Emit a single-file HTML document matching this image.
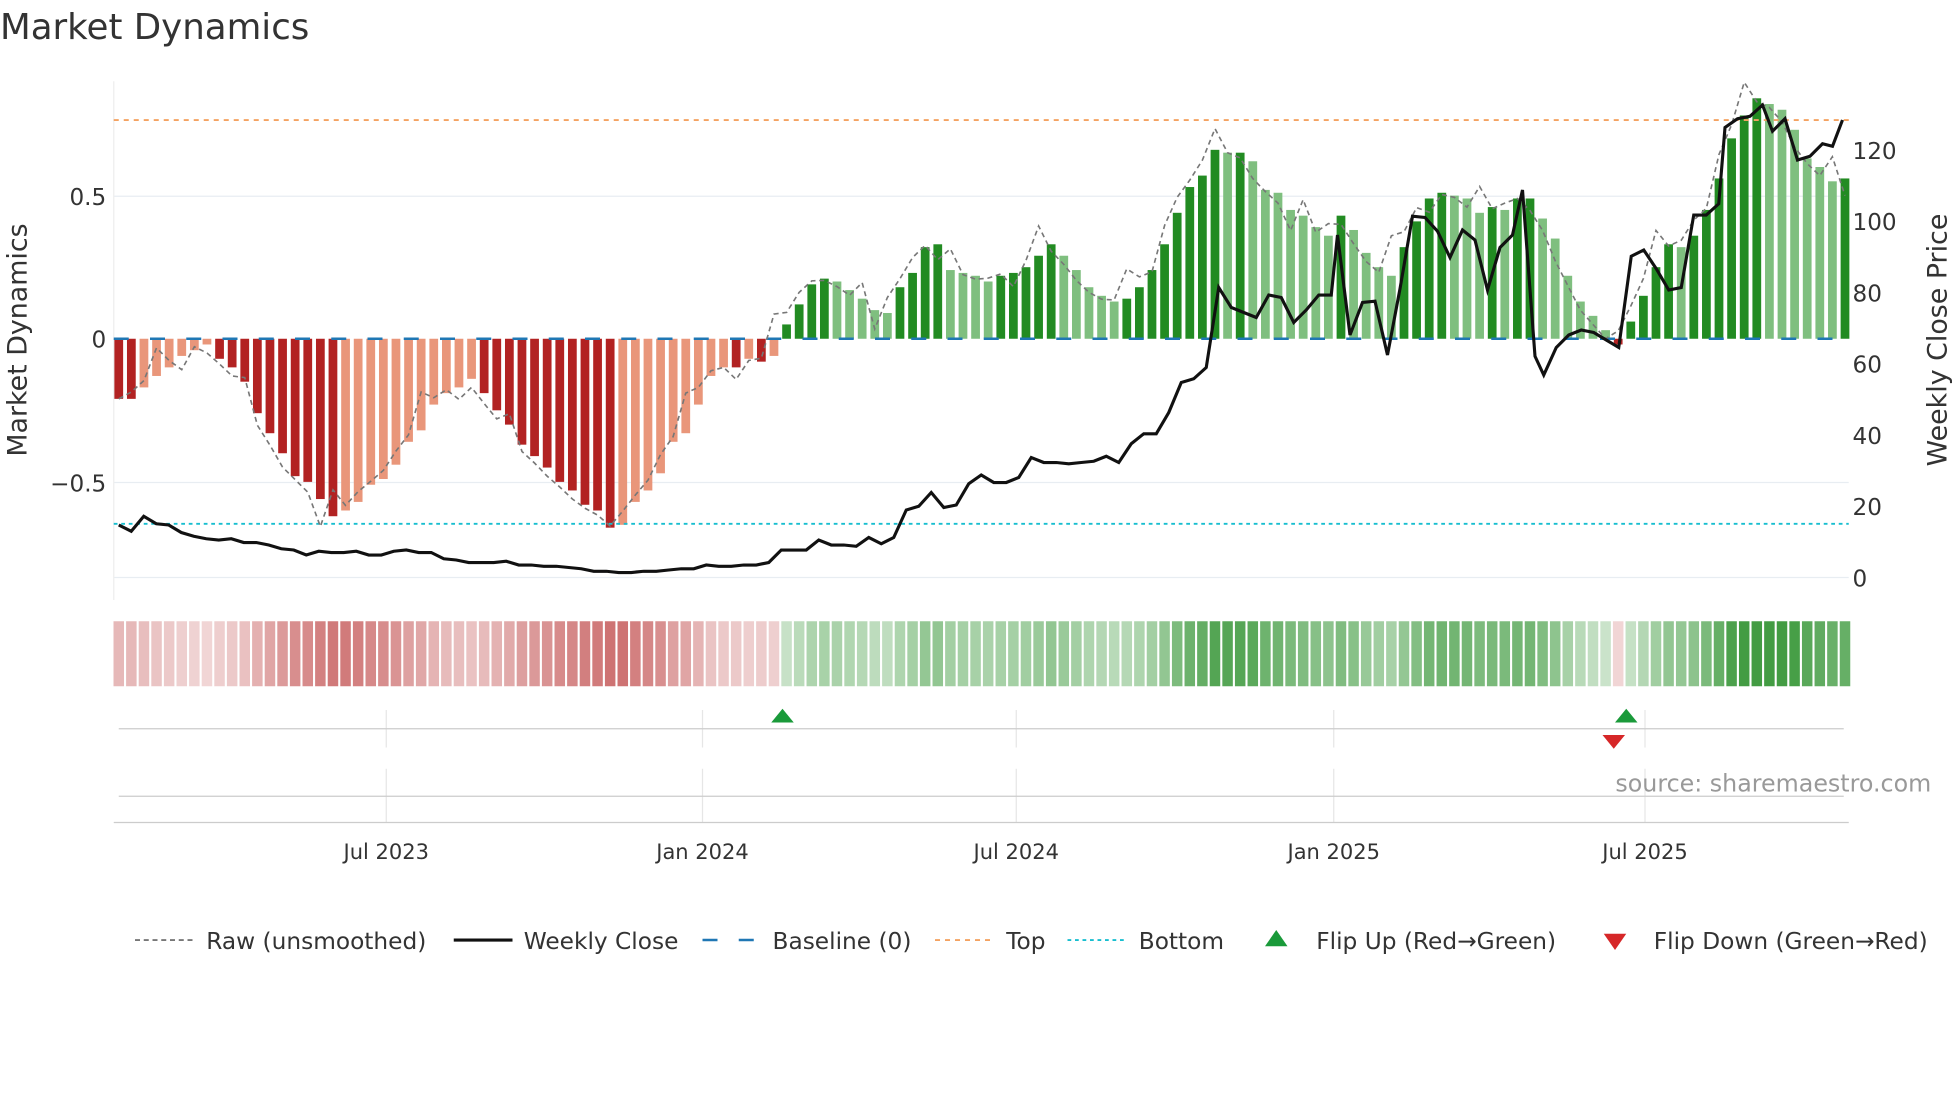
<!DOCTYPE html>
<html><head><meta charset="utf-8"><style>
html,body{margin:0;padding:0;background:#fff;}
svg{display:block;font-family:"DejaVu Sans","Liberation Sans",sans-serif;}
</style></head><body>
<svg id="s" width="1960" height="1102" viewBox="0 0 1568 881.6" xmlns="http://www.w3.org/2000/svg">
<rect width="1568" height="882" fill="#fff"/>
<text x="0" y="31" font-size="28.5" fill="#333">Market Dynamics</text>
<g stroke="#e8edf2" stroke-width="1">
<line x1="91" y1="157" x2="1479" y2="157"/>
<line x1="91" y1="386" x2="1479" y2="386"/>
<line x1="91" y1="462" x2="1479" y2="462"/>
</g>
<line x1="91" y1="65" x2="91" y2="480" stroke="#eee"/>
<g id="bars"></g>
<line x1="91" y1="271" x2="1479" y2="271" stroke="#1f77b4" stroke-width="2" stroke-dasharray="12,17"/>
<line x1="91" y1="96" x2="1479" y2="96" stroke="#f4a261" stroke-width="1.5" stroke-dasharray="4,4"/>
<line x1="91" y1="419" x2="1479" y2="419" stroke="#17becf" stroke-width="1.5" stroke-dasharray="3,3"/>
<polyline id="raw" fill="none" stroke="#777" stroke-width="1.3" stroke-dasharray="4,3"/>
<polyline id="price" fill="none" stroke="#111" stroke-width="2.5"/>
<g font-size="18.5" fill="#333">
<text x="85" y="164" text-anchor="end">0.5</text>
<text x="85" y="278" text-anchor="end">0</text>
<text x="85" y="393" text-anchor="end">−0.5</text>
<text x="1482" y="469">0</text><text x="1482" y="412">20</text><text x="1482" y="355">40</text>
<text x="1482" y="298">60</text><text x="1482" y="241">80</text><text x="1482" y="184">100</text><text x="1482" y="127">120</text>
<text transform="translate(21,272) rotate(-90)" text-anchor="middle" font-size="21.5">Market Dynamics</text>
<text transform="translate(1557,272) rotate(-90)" text-anchor="middle" font-size="21.5">Weekly Close Price</text>
</g>
<g id="heat"></g>
<g stroke="#e6e6e6" stroke-width="1">
<line x1="309" y1="568" x2="309" y2="598"/><line x1="562" y1="568" x2="562" y2="598"/><line x1="813" y1="568" x2="813" y2="598"/><line x1="1067" y1="568" x2="1067" y2="598"/><line x1="1316" y1="568" x2="1316" y2="598"/>
<line x1="309" y1="615" x2="309" y2="658"/><line x1="562" y1="615" x2="562" y2="658"/><line x1="813" y1="615" x2="813" y2="658"/><line x1="1067" y1="615" x2="1067" y2="658"/><line x1="1316" y1="615" x2="1316" y2="658"/>
</g>
<line x1="95" y1="583" x2="1475" y2="583" stroke="#ccc"/>
<line x1="95" y1="637" x2="1475" y2="637" stroke="#ccc"/>
<line x1="91" y1="658" x2="1479" y2="658" stroke="#ccc"/>
<polygon points="617,578 635,578 626,567" fill="#1a9a3a"/>
<polygon points="1292,578 1310,578 1301,567" fill="#1a9a3a"/>
<polygon points="1282,588 1300,588 1291,599" fill="#d62728"/>
<text x="1545" y="633" font-size="19" fill="#999" text-anchor="end">source: sharemaestro.com</text>
<g font-size="16.8" fill="#333" text-anchor="middle">
<text x="309" y="687">Jul 2023</text><text x="562" y="687">Jan 2024</text><text x="813" y="687">Jul 2024</text><text x="1067" y="687">Jan 2025</text><text x="1316" y="687">Jul 2025</text>
</g>
<g font-size="18.6" fill="#333">
<line x1="108" y1="752" x2="154" y2="752" stroke="#777" stroke-width="1.5" stroke-dasharray="4,3"/><text x="165" y="759">Raw (unsmoothed)</text>
<line x1="363" y1="752" x2="410" y2="752" stroke="#111" stroke-width="2.5"/><text x="419" y="759">Weekly Close</text>
<line x1="562" y1="752" x2="608" y2="752" stroke="#1f77b4" stroke-width="2" stroke-dasharray="12,17"/><text x="618" y="759">Baseline (0)</text>
<line x1="748" y1="752" x2="794" y2="752" stroke="#f4a261" stroke-width="1.5" stroke-dasharray="4,4"/><text x="805" y="759">Top</text>
<line x1="854" y1="752" x2="900" y2="752" stroke="#17becf" stroke-width="1.5" stroke-dasharray="3,3"/><text x="911" y="759">Bottom</text>
<polygon points="1012,757 1030,757 1021,744" fill="#1a9a3a"/><text x="1053" y="759">Flip Up (Red→Green)</text>
<polygon points="1283,747 1301,747 1292,760" fill="#d62728"/><text x="1323" y="759">Flip Down (Green→Red)</text>
</g>
</svg>
<script>
var V=[-0.21,-0.21,-0.17,-0.13,-0.1,-0.06,-0.04,-0.02,-0.07,-0.1,-0.15,-0.26,-0.33,-0.4,-0.48,-0.5,-0.56,-0.62,-0.6,-0.57,-0.51,-0.49,-0.44,-0.36,-0.32,-0.23,-0.19,-0.17,-0.14,-0.19,-0.25,-0.3,-0.37,-0.41,-0.45,-0.5,-0.53,-0.58,-0.6,-0.66,-0.65,-0.57,-0.53,-0.47,-0.36,-0.33,-0.23,-0.13,-0.1,-0.1,-0.07,-0.08,-0.06,0.05,0.12,0.19,0.21,0.2,0.17,0.14,0.1,0.09,0.18,0.23,0.32,0.33,0.24,0.23,0.22,0.2,0.22,0.23,0.25,0.29,0.33,0.29,0.24,0.18,0.15,0.13,0.14,0.18,0.24,0.33,0.44,0.53,0.57,0.66,0.65,0.65,0.62,0.52,0.51,0.45,0.43,0.39,0.36,0.43,0.38,0.3,0.25,0.22,0.32,0.41,0.49,0.51,0.5,0.49,0.44,0.46,0.45,0.49,0.49,0.42,0.35,0.22,0.13,0.08,0.03,-0.02,0.06,0.15,0.25,0.33,0.32,0.36,0.45,0.56,0.7,0.78,0.84,0.82,0.8,0.73,0.63,0.6,0.55,0.56];
var n=V.length,x0=95,x1=1476,dx=(x1-x0)/(n-1),bw=7,NS="http://www.w3.org/2000/svg";
var g=document.getElementById('bars'),h=document.getElementById('heat'),raw=[];
function r(p,a){var e=document.createElementNS(NS,'rect');for(var k in a)e.setAttribute(k,a[k]);p.appendChild(e);}
for(var i=0;i<n;i++){var v=V[i],x=x0+i*dx,p=i?V[i-1]:0,inc=Math.abs(v)>=Math.abs(p)||(v*p<0);
var c=v<0?(inc?'#b22222':'#e9967a'):(inc?'#228b22':'#7fbf7f');
var y=271-v*229;r(g,{x:x-bw/2,y:Math.min(y,271),width:bw,height:Math.abs(y-271),fill:c});
var a=Math.min(1,0.25+Math.abs(v)*1.0);
r(h,{x:x-4.2,y:497,width:8.4,height:52,fill:v<0?'rgba(178,34,34,'+(a*0.7)+')':'rgba(34,139,34,'+(a*0.85)+')'});
var nx=i+1<n?V[i+1]:v;var rv=v+(nx-v)*0.6+(i%7==3?0.08:0)+(i%11==5?-0.06:0);raw.push(x.toFixed(1)+','+(271-rv*229).toFixed(1));}
document.getElementById('raw').setAttribute('points',raw.join(' '));
var P=[95,420,105,425,115,413,125,419,135,420,145,426,155,429,165,431,175,432,185,431,195,434,205,434,215,436,225,439,235,440,245,444,255,441,265,442,275,442,285,441,295,444,305,444,315,441,325,440,335,442,345,442,355,447,365,448,375,450,385,450,395,450,405,449,415,452,425,452,435,453,445,453,455,454,465,455,475,457,485,457,495,458,505,458,515,457,525,457,535,456,545,455,555,455,565,452,575,453,585,453,595,452,605,452,615,450,625,440,635,440,645,440,655,432,665,436,675,436,685,437,695,430,705,435,715,430,725,408,735,405,745,394,755,406,765,404,775,387,785,380,795,386,805,386,815,382,825,366,835,370,845,370,855,371,865,370,875,369,885,365,895,370,905,355,915,347,925,347,935,330,945,306,955,303,965,294,975,230,985,246,995,250,1005,254,1015,236,1025,238,1035,258,1045,248,1055,236,1065,236,1070,188,1080,268,1090,242,1100,241,1110,284,1120,231,1130,173,1140,174,1150,185,1160,206,1170,184,1180,192,1190,232,1200,198,1210,188,1218,152,1228,285,1235,300,1245,278,1255,268,1265,264,1275,266,1285,272,1295,278,1305,205,1315,200,1325,215,1335,232,1345,230,1355,172,1365,172,1375,163,1380,102,1390,95,1400,93,1410,84,1418,105,1428,95,1438,128,1448,125,1458,115,1466,117,1474,96];
var s=[];for(var j=0;j<P.length;j+=2)s.push(P[j]+','+P[j+1]);
document.getElementById('price').setAttribute('points',s.join(' '));
</script>
</body></html>
